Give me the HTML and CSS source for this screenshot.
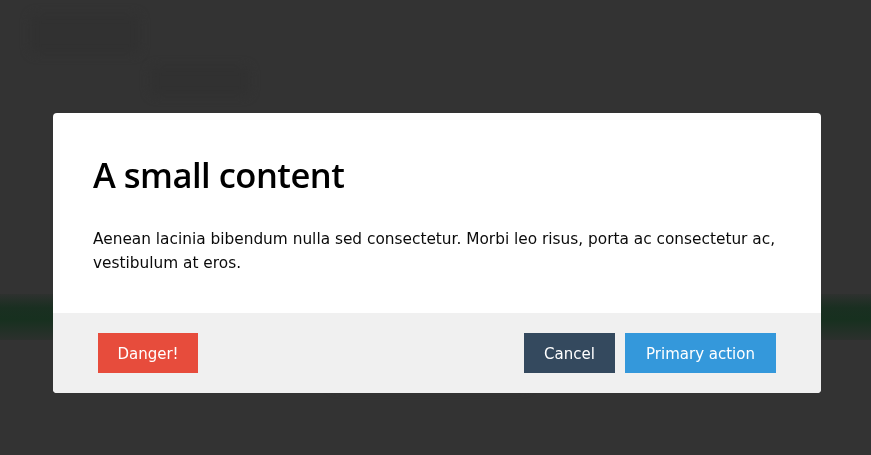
FILE: index.html
```html
<!DOCTYPE html>
<html lang="en">
<head>
<meta charset="utf-8">
<title>Modal</title>
<link rel="stylesheet" href="styles.css">
</head>
<body>
<div class="page">
  <div class="page-head">
    <div class="ghost ghost-title"></div>
    <div class="ghost ghost-sub"></div>
  </div>
  <div class="page-band"></div>
  <div class="ghost ghost-bottom"></div>
</div>
<div class="overlay">
  <div class="modal">
    <div class="modal-body">
      <h1 class="modal-title">A small content</h1>
      <p class="modal-text">Aenean lacinia bibendum nulla sed consectetur. Morbi leo risus, porta ac consectetur ac, vestibulum at eros.</p>
    </div>
    <div class="modal-footer">
      <button class="btn btn-danger">Danger!</button>
      <div class="footer-right">
        <button class="btn btn-cancel">Cancel</button>
        <button class="btn btn-primary">Primary action</button>
      </div>
    </div>
  </div>
</div>
</body>
</html>
```

FILE: styles.css
```css
html, body {
  margin: 0;
  padding: 0;
  height: 100%;
}
body {
  background: #333333;
  font-family: "DejaVu Sans", "Noto Sans", sans-serif;
  overflow: hidden;
}
.page {
  display: flex;
  flex-direction: column;
  height: 100%;
}
.page-head {
  padding: 14px 0 0 30px;
  display: flex;
  flex-direction: column;
  gap: 12px;
}
.ghost {
  background: #313131;
  border-radius: 8px;
  filter: blur(5px);
}
.ghost-title {
  width: 110px;
  height: 40px;
}
.ghost-sub {
  width: 100px;
  height: 30px;
  margin-left: 120px;
}
.page-band {
  margin-top: 198px;
  height: 46px;
  background: linear-gradient(#2e312f, #1a2f21 30%, #17301f 55%, #2c302d);
}
.ghost-bottom {
  margin: 18px 0 0 330px;
  width: 200px;
  height: 30px;
  background: #313131;
}
.overlay {
  position: fixed;
  inset: 0;
  display: flex;
  align-items: flex-start;
  justify-content: flex-start;
  padding: 113px 0 0 53px;
}
.modal {
  width: 768px;
  background: #ffffff;
  border-radius: 4px;
  overflow: hidden;
}
.modal-body {
  padding: 40px 40px 20px;
  height: 140px;
}
.modal-title {
  margin: 0;
  font-family: "Open Sans", "Noto Sans", sans-serif;
  font-size: 34.5px;
  line-height: 44px;
  font-weight: 600;
  color: #000;
  letter-spacing: -0.5px;
}
.modal-text {
  margin: 30px 0 0;
  font-size: 15.35px;
  line-height: 24px;
  color: #0a0a0a;
}
.modal-footer {
  background: #f0f0f0;
  height: 80px;
  box-sizing: border-box;
  padding: 20px 45px;
  display: flex;
  justify-content: space-between;
  align-items: center;
}
.footer-right {
  display: flex;
  gap: 10px;
}
.btn {
  border: 0;
  height: 40px;
  padding: 2px 0 0;
  font-family: inherit;
  font-size: 15px;
  color: #fff;
  cursor: pointer;
}
.btn-danger { background: #e74c3c; width: 100px; }
.btn-cancel { background: #34495e; width: 91px; }
.btn-primary { background: #3498db; width: 151px; }
```
